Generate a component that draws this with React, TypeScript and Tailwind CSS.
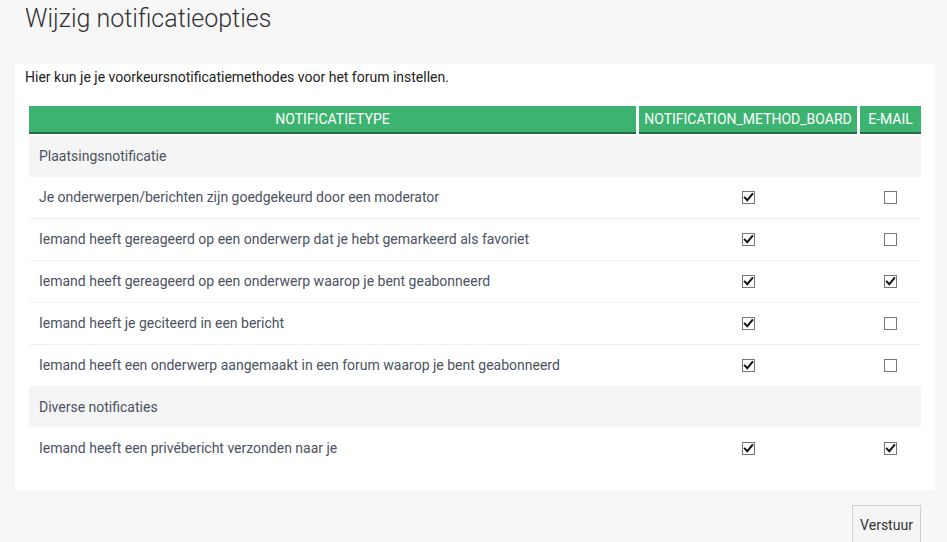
import React from "react";

const Check = ({ on }: { on: boolean }) => (
  <svg width="13" height="13" viewBox="0 0 13 13" className="block">
    <rect x="0.5" y="0.5" width="12" height="12" fill="#fff" stroke="#767676" />
    {on && (
      <path d="M2.8 6.6 L5.3 9.2 L10.3 3.2" fill="none" stroke="#111" strokeWidth="2" strokeLinecap="square" />
    )}
  </svg>
);

type Row = { t: string; b: boolean; e: boolean };

const group1: Row[] = [
  { t: "Je onderwerpen/berichten zijn goedgekeurd door een moderator", b: true, e: false },
  { t: "Iemand heeft gereageerd op een onderwerp dat je hebt gemarkeerd als favoriet", b: true, e: false },
  { t: "Iemand heeft gereageerd op een onderwerp waarop je bent geabonneerd", b: true, e: true },
  { t: "Iemand heeft je geciteerd in een bericht", b: true, e: false },
  { t: "Iemand heeft een onderwerp aangemaakt in een forum waarop je bent geabonneerd", b: true, e: false },
];
const group2: Row[] = [{ t: "Iemand heeft een privébericht verzonden naar je", b: true, e: true }];

const grid = "grid grid-cols-[607px_218px_61px] gap-x-[3px]";

const DataRow = ({ r, last }: { r: Row; last?: boolean }) => (
  <div className={`${grid} h-[42px] items-center bg-white ${last ? "" : "border-b border-[#f1f1f1]"}`}>
    <div className="pl-[10px] text-[14px] text-[#4b5262]">{r.t}</div>
    <div className="flex justify-center">
      <Check on={r.b} />
    </div>
    <div className="flex justify-center">
      <Check on={r.e} />
    </div>
  </div>
);

const Cat = ({ t, h }: { t: string; h: string }) => (
  <div className={`${h} flex items-center bg-[#f5f5f5] pl-[10px] text-[14px] text-[#4b5262]`}>{t}</div>
);

const headCell =
  "flex items-center justify-center border-b-2 border-[#2b6a45] bg-[#3cb371] text-[14px] text-white";

export default function App() {
  return (
    <div className="min-h-[542px] w-[947px] overflow-hidden bg-[#f7f7f7] [font-family:Roboto,'Liberation_Sans',sans-serif]">
      <h1 className="pl-[25px] pt-[3px] text-[25px] font-light leading-[32px] text-[#333]">Wijzig notificatieopties</h1>
      <div className="ml-[15px] mt-[29px] w-[920px] bg-white px-[14px] pb-[21px] pt-[4px]">
        <p className="-ml-[4px] text-[14px] leading-[18px] text-[#222]">
          Hier kun je je voorkeursnotificatiemethodes voor het forum instellen.
        </p>
        <div className="mt-[20px] w-[892px]">
          <div className={`${grid} h-[28px]`}>
            <div className={headCell}>NOTIFICATIETYPE</div>
            <div className={headCell}>NOTIFICATION_METHOD_BOARD</div>
            <div className={headCell}>E-MAIL</div>
          </div>
          <div className="mt-[2px]">
            <Cat t="Plaatsingsnotificatie" h="h-[41px]" />
            {group1.map((r) => (
              <DataRow key={r.t} r={r} />
            ))}
            <Cat t="Diverse notificaties" h="h-[40px]" />
            {group2.map((r) => (
              <DataRow key={r.t} r={r} last />
            ))}
          </div>
        </div>
      </div>
      <div className="flex justify-end pr-[26px] pt-[15px]">
        <button className="h-[40px] w-[69px] border border-[#d0d0d0] bg-[#f5f5f5] text-[14px] text-[#333]">Verstuur</button>
      </div>
    </div>
  );
}
